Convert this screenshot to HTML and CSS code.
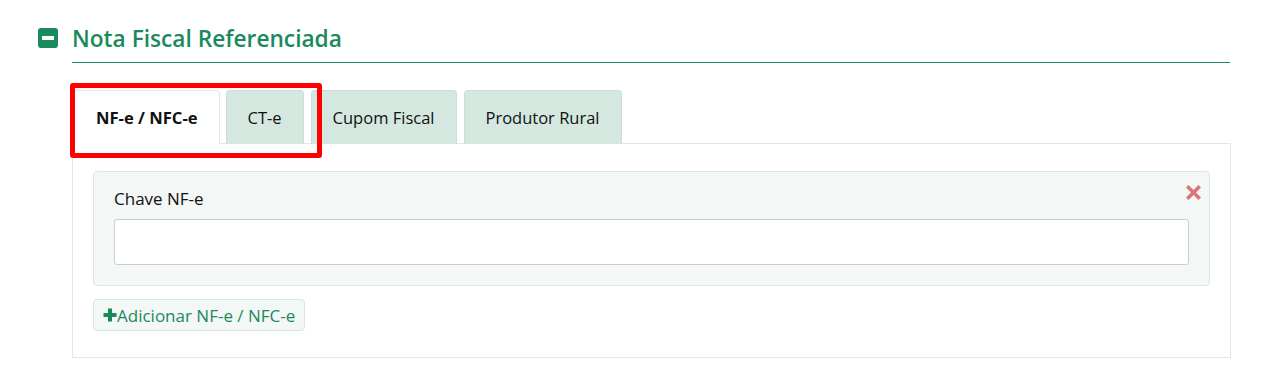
FILE: index.html
```html
<!DOCTYPE html>
<html lang="pt-BR">

<head>
    <meta charset="UTF-8">
    <meta name="viewport" content="width=device-width, initial-scale=1.0">
    <title>Nota Fiscal Referenciada</title>
    <link rel="stylesheet" href="styles.css">
</head>

<body>
<div class="section">
    <div class="section-header">
        <span class="toggle-icon"><span class="toggle-bar"></span></span>
        <h2 class="section-title">Nota Fiscal Referenciada</h2>
    </div>

    <div class="tabs-wrap">
        <ul class="tabs">
            <li class="tab active">NF-e / NFC-e</li>
            <li class="tab">CT-e</li>
            <li class="tab">Cupom Fiscal</li>
            <li class="tab">Produtor Rural</li>
        </ul>
        <div class="highlight"></div>

        <div class="tab-panel">
            <div class="ref-card">
                <label for="chave_nfe" class="ref-label">Chave NF-e</label>
                <input type="text" id="chave_nfe" class="ref-input">
                <button class="remove-btn" title="Remover">
                    <svg width="15" height="15" viewBox="0 0 15 15">
                        <path d="M2.5 2.5 L12.5 12.5 M12.5 2.5 L2.5 12.5" stroke="#d9777a" stroke-width="3.6" stroke-linecap="square"/>
                    </svg>
                </button>
            </div>
            <button class="add-btn">
                <svg width="14" height="14" viewBox="0 0 14 14">
                    <path d="M7 0.5 V13.5 M0.5 7 H13.5" stroke="#1a8a5c" stroke-width="4"/>
                </svg>Adicionar NF-e / NFC-e
            </button>
        </div>
    </div>
</div>
</body>

</html>
```

FILE: styles.css
```css
* {
    padding: 0;
    margin: 0;
    box-sizing: border-box;
}

body {
    font-family: "Open Sans", "Noto Sans", sans-serif;
    color: #111;
    background: #fff;
}

.section {
    padding: 24px 38px 0 38px;
}

.section-header {
    display: flex;
    align-items: flex-start;
    gap: 14px;
}

.toggle-icon {
    width: 20px;
    height: 20px;
    margin-top: 4px;
    flex: none;
    background: #1a8a5c;
    border-radius: 3px;
    display: flex;
    align-items: center;
    justify-content: center;
}

.toggle-bar {
    width: 12px;
    height: 4px;
    background: #fff;
}

.section-title {
    flex: 1;
    font-size: 22.7px;
    font-weight: 600;
    color: #1a8a5c;
    line-height: 30px;
    padding-bottom: 8px;
    border-bottom: 1px solid #1a8a5c;
}

.tabs-wrap {
    position: relative;
    margin: 27px -1px 0 34px;
}

.tabs {
    list-style: none;
    display: flex;
    gap: 7px;
    padding-left: 2px;
    margin-bottom: -1px;
}

.tab {
    height: 54px;
    padding: 0 21px;
    font-size: 16.5px;
    line-height: 53px;
    background: #d5e8e0;
    border: 1px solid #c9dfd6;
    border-bottom: none;
    border-radius: 4px 4px 0 0;
    position: relative;
    z-index: 1;
}

.tab.active {
    background: #fff;
    border-color: #e5e5e5;
    font-weight: 700;
    font-size: 16.6px;
    margin-right: -1px;
}

.highlight {
    position: absolute;
    left: -2px;
    top: -7px;
    width: 252px;
    height: 75px;
    border: 5px solid #f00;
    border-radius: 3px;
    z-index: 2;
}

.tab-panel {
    border: 1px solid #e5e5e5;
    padding: 27px 20px 26px 20px;
}

.ref-card {
    position: relative;
    background: #f3f7f6;
    border: 1px solid #dce8e4;
    border-radius: 4px;
    padding: 16px 20px 20px 20px;
}

.ref-label {
    display: block;
    font-size: 17px;
    line-height: 22px;
    margin-bottom: 9px;
}

.ref-input {
    display: block;
    width: 100%;
    height: 46px;
    border: 1px solid #ccc;
    border-radius: 3px;
    background: #fff;
}

.remove-btn {
    position: absolute;
    top: 13px;
    right: 8px;
    border: none;
    background: transparent;
    cursor: pointer;
    line-height: 0;
}

.add-btn {
    margin-top: 13px;
    height: 32px;
    padding: 0 9px 0 9px;
    display: inline-flex;
    align-items: center;
    font-family: inherit;
    font-size: 17px;
    color: #1a8a5c;
    background: #f3f7f6;
    border: 1px solid #d6e6e0;
    border-radius: 4px;
    cursor: pointer;
}
```
